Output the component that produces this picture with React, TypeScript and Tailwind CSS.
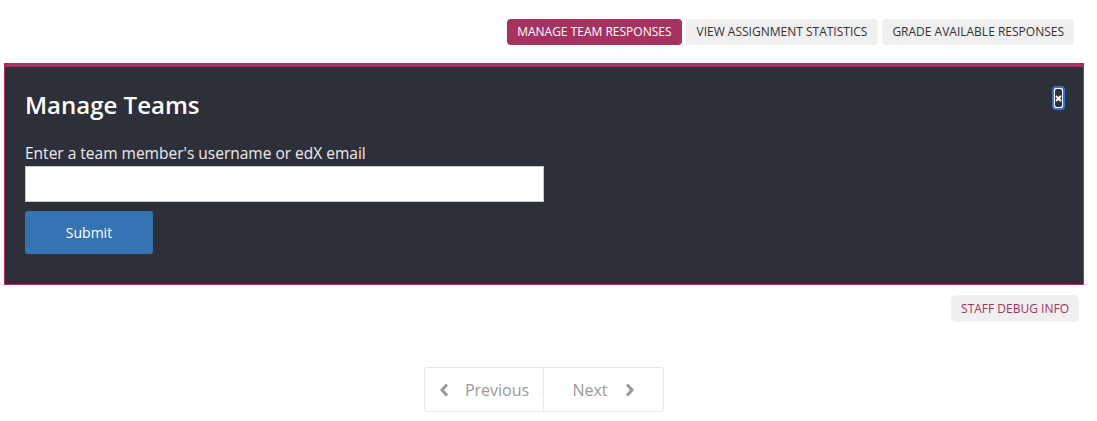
const App = () => {
  return (
    <div className="w-[1097px] h-[421px] bg-white font-['Open_Sans',sans-serif] overflow-hidden">
      <div className="flex justify-end gap-[4px] pt-[19px] pr-[23px]">
        <button className="h-[26px] px-[10px] rounded-[4px] bg-[#a6325f] text-white text-[12px] leading-none">
          MANAGE TEAM RESPONSES
        </button>
        <button className="h-[26px] px-[11px] rounded-[4px] bg-[#efefef] text-[#333] text-[12px] leading-none">
          VIEW ASSIGNMENT STATISTICS
        </button>
        <button className="h-[26px] px-[10px] rounded-[4px] bg-[#efefef] text-[#333] text-[12px] leading-none">
          GRADE AVAILABLE RESPONSES
        </button>
      </div>

      <div className="relative ml-[4px] mt-[18px] w-[1080px] h-[222px] bg-[#2e3039] border border-[#a6325f] border-t-[4px] px-[20px] pt-[22px]">
        <h2 className="text-white text-[24px] leading-[31px] font-semibold">Manage Teams</h2>
        <button className="absolute top-[19px] right-[18px] w-[13px] h-[24px] rounded-[4px] bg-white border-2 border-[#3b6fd0] p-[1px]">
          <span className="flex w-full h-full items-center justify-center rounded-[2px] bg-[#2e3039]">
            <svg width="7" height="7" viewBox="0 0 7 7">
              <path d="M1 1L6 6M6 1L1 6" stroke="#ffffff" strokeWidth="2" />
            </svg>
          </span>
        </button>
        <label className="block mt-[23px] text-[#ececec] text-[15.5px] leading-[20px]">
          Enter a team member's username or edX email
        </label>
        <input
          type="text"
          className="block mt-[3px] w-[519px] h-[36px] bg-white border border-[#c8c8c8] outline-none"
        />
        <button className="mt-[9px] w-[128px] h-[43px] rounded-[3px] bg-[#3673b2] text-white text-[14px]">
          Submit
        </button>
      </div>

      <div className="flex justify-end pr-[18px] mt-[10px]">
        <button className="h-[27px] px-[10px] rounded-[5px] bg-[#efefef] text-[#a6325f] text-[12px] leading-none">
          STAFF DEBUG INFO
        </button>
      </div>

      <div className="flex justify-center mt-[45px] pr-[9px]">
        <div className="flex h-[45px] border border-[#e8e8e8] rounded-[3px]">
          <div className="w-[119px] flex items-center justify-center gap-[16px] text-[#999] text-[16px] border-r border-[#e8e8e8]">
            <svg width="10" height="14" viewBox="0 0 10 14">
              <path d="M8 1.5L3 7L8 12.5" stroke="#999" strokeWidth="3" fill="none" />
            </svg>
            Previous
          </div>
          <div className="w-[119px] flex items-center justify-center gap-[17px] text-[#999] text-[16px]">
            Next
            <svg width="10" height="14" viewBox="0 0 10 14">
              <path d="M2 1.5L7 7L2 12.5" stroke="#999" strokeWidth="3" fill="none" />
            </svg>
          </div>
        </div>
      </div>
    </div>
  );
};

export default App;
